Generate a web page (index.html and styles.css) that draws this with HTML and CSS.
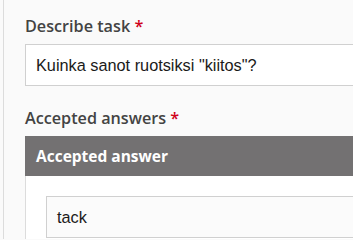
FILE: index.html
```html
<!DOCTYPE html>
<html>
<head>
<meta charset="utf-8">
<link rel="stylesheet" href="styles.css">
</head>
<body>
<div class="panel">
  <div class="field">
    <div class="label">Describe task <span class="req">*</span></div>
    <div class="input">Kuinka sanot ruotsiksi "kiitos"?</div>
  </div>
  <div class="field field-answers">
    <div class="label">Accepted answers <span class="req">*</span></div>
    <div class="group">
      <div class="group-head">Accepted answer</div>
      <div class="group-body">
        <div class="input">tack</div>
      </div>
    </div>
  </div>
</div>
</body>
</html>
```
FILE: styles.css
```css
html, body {
  margin: 0;
  padding: 0;
  background: #fafafa;
  overflow: hidden;
}
body {
  font-family: "Open Sans", "Noto Sans", sans-serif;
  width: 353px;
  height: 239px;
}
.panel {
  margin-left: 3px;
  border-left: 1px solid #dcdcdc;
  padding: 15px 0 0 21px;
  height: 300px;
}
.label {
  font-size: 16.2px;
  font-weight: 600;
  color: #434343;
  line-height: 23px;
  white-space: nowrap;
}
.req {
  color: #d0021b;
}
.input {
  margin-top: 6px;
  width: 400px;
  height: 40px;
  box-sizing: content-box;
  border: 1px solid #d0d0d0;
  background: #ffffff;
  padding: 0 10px;
  font-family: "Liberation Sans", Arial, sans-serif;
  font-size: 16.3px;
  line-height: 41px;
  color: #1a1a1a;
  white-space: nowrap;
}
.field-answers {
  margin-top: 21px;
}
.group {
  margin-top: 6px;
}
.group-head {
  height: 40px;
  line-height: 40px;
  background: #737172;
  color: #ffffff;
  font-weight: 700;
  font-size: 15.5px;
  padding-left: 11px;
  white-space: nowrap;
}
.group-body {
  background: #ffffff;
  border-left: 1px solid #dcdcdc;
  padding: 20px 0 20px 20px;
}
.group-body .input {
  margin-top: 0;
  background: #fbfbfb;
}
```
